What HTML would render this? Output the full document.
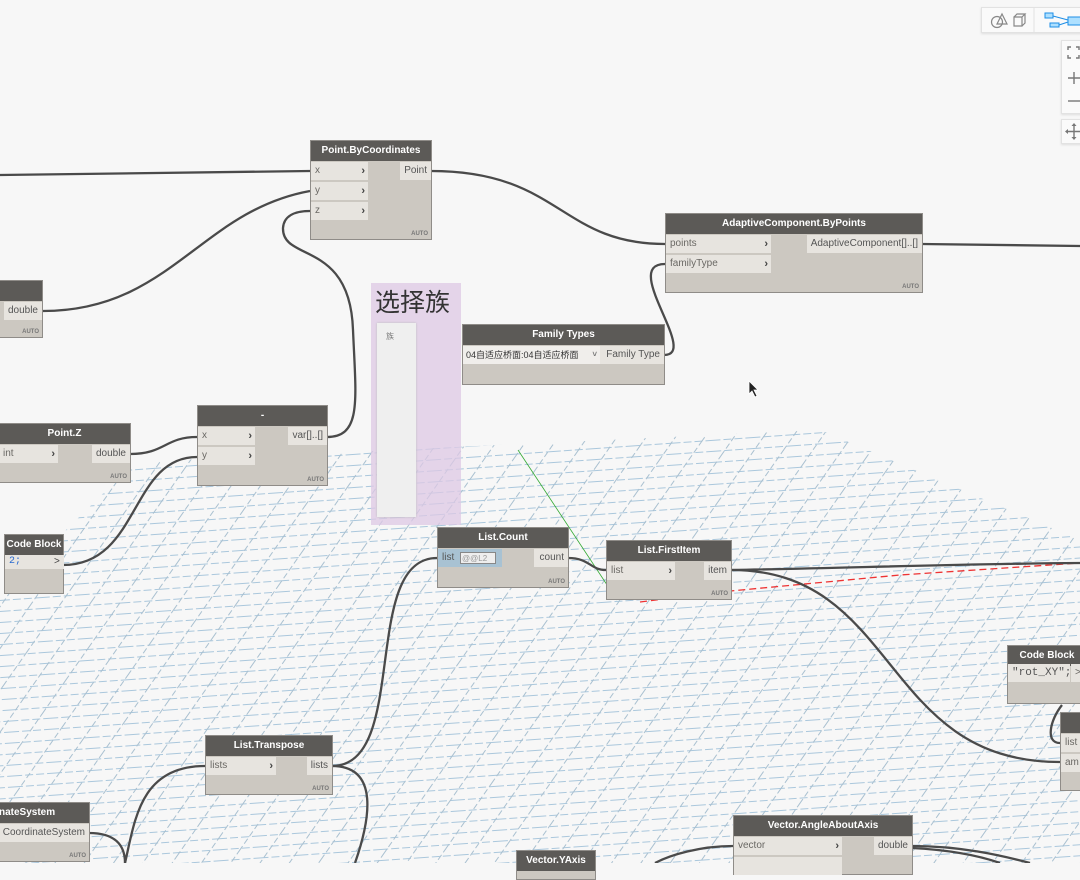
<!DOCTYPE html>
<html><head><meta charset="utf-8">
<style>
html,body{margin:0;padding:0;width:1080px;height:863px;overflow:hidden;background:#f7f7f7;font-family:"Liberation Sans","Noto Sans CJK SC",sans-serif;}
.n{position:absolute;background:#ccc8c1;border:1px solid #8f8c88;box-sizing:border-box;}
.h{position:absolute;left:0;right:0;top:0;height:20px;background:#5c5a57;color:#fff;font-weight:bold;font-size:10px;text-align:center;line-height:20px;white-space:nowrap;overflow:hidden;}
.p{position:absolute;height:18px;background:#e7e4df;color:#6a6864;font-size:10px;line-height:18px;padding-left:4px;box-sizing:border-box;white-space:nowrap;overflow:hidden;}
.p b{position:absolute;right:3px;top:0;color:#444;font-size:11px;}
.o{position:absolute;height:18px;background:#e7e4df;color:#555;font-size:10px;line-height:18px;padding:0 4px;box-sizing:border-box;text-align:right;white-space:nowrap;}
.a{position:absolute;right:3px;bottom:2px;font-size:6px;color:#777;font-weight:bold;}
svg{position:absolute;left:0;top:0;}
</style></head><body>
<svg width="1080" height="863">
<defs>
<pattern id="ga" width="40" height="11" patternUnits="userSpaceOnUse" patternTransform="rotate(-4)">
<path d="M0 5H40" stroke="#aac7dc" stroke-width="1.1" stroke-dasharray="8,3"/>
</pattern>
<pattern id="gb" width="40" height="24" patternUnits="userSpaceOnUse" patternTransform="rotate(-55)">
<path d="M0 12H40" stroke="#a9c0d0" stroke-width="0.9" stroke-dasharray="6,3"/>
</pattern>
</defs>
<polygon points="0,595 135,462 820,430 1080,540 1080,863 0,863" fill="url(#ga)"/>
<polygon points="0,595 135,462 820,430 1080,540 1080,863 0,863" fill="url(#gb)"/>
<line x1="518" y1="450" x2="617" y2="600" stroke="#3a3" stroke-width="0.8"/>
<path d="M640,602 L720,592 L900,575 L1080,563" stroke="#e33" stroke-width="1.3" stroke-dasharray="7,4" fill="none"/>
</svg>
<div style="position:absolute;left:371px;top:283px;width:90px;height:242px;background:rgba(222,200,228,0.75);"></div>
<div style="position:absolute;left:375px;top:283px;font-size:25px;color:#333;font-family:'Noto Sans CJK SC',sans-serif;">选择族</div>
<div style="position:absolute;left:377px;top:323px;width:39px;height:194px;background:#efefef;box-shadow:0 0 2px #bbb;font-size:8px;color:#777;padding:8px 0 0 9px;box-sizing:border-box;font-family:'Noto Sans CJK SC',sans-serif;">族</div>

<svg width="1080" height="863" style="z-index:1" fill="none" stroke="#4a4a4a" stroke-width="2.3">
<path d="M0,175 L310,171"/>
<path d="M43,311 C170,311 200,211 310,191"/>
<path d="M431,171 C560,171 560,244 665,244"/>
<path d="M664,355 C700,355 620,264 665,264"/>
<path d="M327,437 C362,437 356,400 353,330 C350,240 282,262 283,228 C284,213 300,211 310,211"/>
<path d="M130,454 C165,454 165,437 197,437"/>
<path d="M63,565 C140,565 130,457 197,457"/>
<path d="M568,558 C590,558 590,570 606,570"/>
<path d="M731,570 C850,568 950,564 1080,563"/>
<path d="M731,570 C900,570 880,762 1060,762"/>
<path d="M922,244 L1080,246"/>
<path d="M332,766 C410,766 360,558 437,558"/>
<path d="M205,766 C140,766 135,820 125,863"/>
<path d="M332,766 C380,766 370,820 355,863"/>
<path d="M89,833 C115,833 125,845 125,863"/>
<path d="M733,846 C700,846 670,855 655,863"/>
<path d="M912,846 C960,846 1000,855 1030,863"/>
<path d="M912,848 C950,850 980,856 1000,863"/>
<path d="M1060,743 C1045,743 1050,720 1062,705"/>
</svg>

<div style="position:absolute;left:0;top:0;z-index:2;width:1080px;height:863px;">
<div class="n" style="left:310px;top:140px;width:122px;height:100px;"><div class="h">Point.ByCoordinates</div>
<div class="p" style="left:0;top:21px;width:57px;">x<b>›</b></div><div class="p" style="left:0;top:41px;width:57px;">y<b>›</b></div><div class="p" style="left:0;top:61px;width:57px;">z<b>›</b></div>
<div class="o" style="right:0;top:21px;">Point</div><div class="a">AUTO</div></div>

<div class="n" style="left:665px;top:213px;width:258px;height:80px;"><div class="h">AdaptiveComponent.ByPoints</div>
<div class="p" style="left:0;top:21px;width:105px;">points<b>›</b></div><div class="p" style="left:0;top:41px;width:105px;">familyType<b>›</b></div>
<div class="o" style="right:0;top:21px;">AdaptiveComponent[]..[]</div><div class="a">AUTO</div></div>

<div class="n" style="left:-2px;top:280px;width:45px;height:58px;"><div class="h"></div>
<div class="o" style="right:0;top:21px;">double</div><div class="a">AUTO</div></div>

<div class="n" style="left:462px;top:324px;width:203px;height:61px;"><div class="h">Family Types</div>
<div class="p" style="left:0;top:21px;width:137px;background:#f0eeeb;color:#333;font-size:9px;padding-left:3px;">04自适应桥面:04自适应桥面<b style="font-size:8px;color:#777">˅</b></div>
<div class="o" style="right:0;top:21px;width:64px;">Family Type</div></div>

<div class="n" style="left:-2px;top:423px;width:133px;height:60px;"><div class="h">Point.Z</div>
<div class="p" style="left:0;top:21px;width:59px;">int<b>›</b></div>
<div class="o" style="right:0;top:21px;">double</div><div class="a">AUTO</div></div>

<div class="n" style="left:197px;top:405px;width:131px;height:81px;"><div class="h">-</div>
<div class="p" style="left:0;top:21px;width:57px;">x<b>›</b></div><div class="p" style="left:0;top:41px;width:57px;">y<b>›</b></div>
<div class="o" style="right:0;top:21px;">var[]..[]</div><div class="a">AUTO</div></div>

<div class="n" style="left:4px;top:534px;width:60px;height:60px;"><div class="h">Code Block</div>
<div class="p" style="left:0;top:20px;width:45px;height:14px;line-height:14px;color:#2a6ad0;font-family:'Liberation Mono',monospace;">2;</div>
<div class="p" style="left:45px;top:20px;width:14px;height:14px;line-height:14px;color:#444;">&gt;</div></div>

<div class="n" style="left:437px;top:527px;width:132px;height:61px;"><div class="h">List.Count</div>
<div class="p" style="left:0;top:21px;width:64px;background:#a8c2d3;color:#555;">list<span style="position:absolute;left:22px;top:3px;width:36px;height:12px;background:#eee;border:1px solid #888;font-size:8px;line-height:11px;color:#999;box-sizing:border-box;padding-left:1px">@@L2</span></div>
<div class="o" style="right:0;top:21px;width:34px;">count</div><div class="a">AUTO</div></div>

<div class="n" style="left:606px;top:540px;width:126px;height:60px;"><div class="h">List.FirstItem</div>
<div class="p" style="left:0;top:21px;width:68px;">list<b>›</b></div>
<div class="o" style="right:0;top:21px;">item</div><div class="a">AUTO</div></div>

<div class="n" style="left:1007px;top:645px;width:80px;height:59px;"><div class="h">Code Block</div>
<div class="p" style="left:0;top:18px;width:62px;color:#555;font-family:'Liberation Mono',monospace;font-size:11px;">"rot_XY";</div>
<div class="p" style="left:63px;top:18px;width:14px;">&gt;</div></div>

<div class="n" style="left:1060px;top:712px;width:30px;height:79px;"><div class="h"></div>
<div class="p" style="left:0;top:21px;width:30px;">list</div><div class="p" style="left:0;top:41px;width:30px;">am</div></div>

<div class="n" style="left:205px;top:735px;width:128px;height:60px;"><div class="h">List.Transpose</div>
<div class="p" style="left:0;top:21px;width:70px;">lists<b>›</b></div>
<div class="o" style="right:0;top:21px;">lists</div><div class="a">AUTO</div></div>

<div class="n" style="left:-2px;top:802px;width:92px;height:60px;"><div class="h" style="text-align:right;padding-right:34px;box-sizing:border-box">nateSystem</div>
<div class="o" style="right:0;top:21px;">CoordinateSystem</div><div class="a">AUTO</div></div>

<div class="n" style="left:733px;top:815px;width:180px;height:60px;"><div class="h">Vector.AngleAboutAxis</div>
<div class="p" style="left:0;top:21px;width:108px;">vector<b>›</b></div><div class="p" style="left:0;top:41px;width:108px;"></div>
<div class="o" style="right:0;top:21px;">double</div></div>

<div class="n" style="left:516px;top:850px;width:80px;height:30px;"><div class="h">Vector.YAxis</div></div>

<div style="position:absolute;left:981px;top:7px;width:105px;height:24px;background:#fafafa;border:1px solid #e2e2e2;box-shadow:0 1px 2px #ddd;">
<svg width="105" height="24" style="position:absolute;left:0;top:0">
<circle cx="15" cy="14" r="5.5" fill="none" stroke="#888" stroke-width="1.2"/><path d="M15 16 L20 6 L25 16Z" fill="none" stroke="#888" stroke-width="1.2"/>
<path d="M32 9h8v9h-8z M32 9l3-3h8l-3 3 M43 6v9l-3 3" fill="none" stroke="#888" stroke-width="1.2"/>
<line x1="52" y1="0" x2="52" y2="24" stroke="#e2e2e2"/>
<rect x="63" y="5" width="8" height="5" fill="#aee0ff" stroke="#1d8ee6"/><rect x="68" y="15" width="9" height="4" fill="#aee0ff" stroke="#1d8ee6"/><rect x="86" y="9" width="14" height="8" fill="#aee0ff" stroke="#1d8ee6"/>
<path d="M71 8l15 4M77 17l9-3" stroke="#1d8ee6" stroke-width="1"/>
</svg></div>
<div style="position:absolute;left:1061px;top:40px;width:25px;height:72px;background:#fafafa;border:1px solid #e2e2e2;box-shadow:0 1px 2px #ddd;">
<svg width="25" height="72" style="position:absolute;left:0;top:0" stroke="#777" fill="none" stroke-width="1.4"><path d="M6 9V6h3M14 6h3v3M17 14v3h-3M9 17H6v-3"/><path d="M12 31v12M6 37h12"/><path d="M6 60h12"/></svg></div>
<div style="position:absolute;left:1061px;top:119px;width:25px;height:23px;background:#fafafa;border:1px solid #e2e2e2;box-shadow:0 1px 2px #ddd;">
<svg width="25" height="23" style="position:absolute;left:0;top:0" stroke="#777" fill="#777" stroke-width="1.4"><path d="M12 5v13M5 11.5h14" fill="none"/><path d="M12 3l-2.5 3h5zM12 20l-2.5-3h5zM3 11.5l3-2.5v5zM21 11.5l-3-2.5v5z" stroke="none"/></svg></div>

<svg width="12" height="18" style="position:absolute;left:748px;top:380px"><path d="M1 1 L1 14 L4 11 L7 17 L9 16 L6 10 L10 10Z" fill="#222" stroke="#fff" stroke-width="0.8"/></svg>
</div>
</body></html>
